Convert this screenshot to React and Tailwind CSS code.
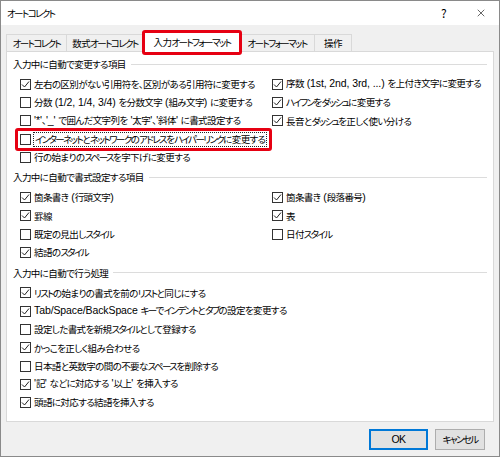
import { X } from 'lucide-react'

const sections = [
    {
        title: '入力中に自動で変更する項目',
        rows: [
            [{ t: '左右の区別がない引用符を、区別がある引用符に変更する', c: true }, { t: '序数 (1st, 2nd, 3rd, ...) を上付き文字に変更する', c: true }],
            [{ t: '分数 (1/2, 1/4, 3/4) を分数文字 (組み文字) に変更する', c: false }, { t: 'ハイフンをダッシュに変更する', c: true }],
            [{ t: "'*'、'_' で囲んだ文字列を '太字'、'斜体' に書式設定する", c: false }, { t: '長音とダッシュを正しく使い分ける', c: true }],
            [{ t: 'インターネットとネットワークのアドレスをハイパーリンクに変更する', c: false, focus: true }],
            [{ t: '行の始まりのスペースを字下げに変更する', c: false }],
        ],
    },
    {
        title: '入力中に自動で書式設定する項目',
        rows: [
            [{ t: '箇条書き (行頭文字)', c: true }, { t: '箇条書き (段落番号)', c: true }],
            [{ t: '罫線', c: true }, { t: '表', c: true }],
            [{ t: '既定の見出しスタイル', c: false }, { t: '日付スタイル', c: false }],
            [{ t: '結語のスタイル', c: true }],
        ],
    },
    {
        title: '入力中に自動で行う処理',
        rows: [
            [{ t: 'リストの始まりの書式を前のリストと同じにする', c: true }],
            [{ t: 'Tab/Space/BackSpace キーでインデントとタブの設定を変更する', c: true }],
            [{ t: '設定した書式を新規スタイルとして登録する', c: false }],
            [{ t: 'かっこを正しく組み合わせる', c: true }],
            [{ t: '日本語と英数字の間の不要なスペースを削除する', c: false }],
            [{ t: "'記' などに対応する '以上' を挿入する", c: true }],
            [{ t: '頭語に対応する結語を挿入する', c: true }],
        ],
    },
]

const tabs = ['オートコレクト', '数式オートコレクト', '入力オートフォーマット', 'オートフォーマット', '操作']
const tabWidths = ['w-[61px]', 'w-[78px]', 'w-[96px]', 'w-[76px]', 'w-[38px]']

// Meiryo UI sets latin wider and katakana narrower than Noto CJK, so runs get their own spacing
function Label({ text }) {
    return text.split(/([\x20-\x7e]+|[\u30a0-\u30ff]+)/).map((part, i) => {
        if (i % 2 === 0) return <span key={i}>{part}</span>
        if (/^[\x20-\x7e]/.test(part)) {
            return <span key={i} className="[font-family:'Liberation_Sans',sans-serif] text-[10.5px] tracking-[-0.1px]">{part}</span>
        }
        return <span key={i} className="tracking-[-1.6px]">{part}</span>
    })
}

function Box({ checked }) {
    return (
        <span className="w-[11px] h-[11px] shrink-0 border border-[#333] bg-white flex items-center justify-center">
            {checked && (
                <svg width="9" height="9" viewBox="0 0 9 9">
                    <path d="M1 4.5 L3.5 7 L8 1.5" fill="none" stroke="#222" strokeWidth="1" />
                </svg>
            )}
        </span>
    )
}

function Item({ item }) {
    return (
        <div className="h-[18.3px] flex items-center">
            <div className="relative flex items-center whitespace-nowrap">
                <Box checked={item.c} />
                {item.focus ? (
                    <span className="ml-[2px] px-[1px] border border-dotted border-[#222] leading-[13px]"><Label text={item.t} /></span>
                ) : (
                    <span className="ml-[3px]"><Label text={item.t} /></span>
                )}
                {item.focus && (
                    <span className="absolute left-[-5px] right-[-5px] top-[-4px] bottom-[-4px] border-[3px] border-[#e60012] rounded-[3px]" />
                )}
            </div>
        </div>
    )
}

export default function App() {
    return (
        <div className="w-[500px] h-[457px] border border-[#8a8a8a] bg-[#f0f0f0] flex flex-col text-[9.5px] tracking-[-0.6px] text-black [font-family:'Noto_Sans_CJK_JP','Noto_Sans',sans-serif] [font-feature-settings:'palt']">
            <div className="h-[24px] bg-white flex items-center pl-[6px] pr-[12px] shrink-0">
                <span className="flex-1"><Label text="オートコレクト" /></span>
                <span className="text-[12px] mr-[29px]">?</span>
                <X size={12} strokeWidth={1.2} />
            </div>

            <div className="px-[5px] pt-[7px] relative">
                <div className="flex items-end h-[19px]">
                    {tabs.map((tab, i) => (
                        <div
                            key={tab}
                            className={
                                i === 2
                                    ? `${tabWidths[i]} h-[20px] -mb-px bg-white border border-b-0 border-[#d9d9d9] flex items-center justify-center whitespace-nowrap z-10 relative`
                                    : `${tabWidths[i]} h-[17px] bg-[#f0f0f0] border border-b-0 border-[#d9d9d9] -ml-px first:ml-0 flex items-center justify-center whitespace-nowrap`
                            }
                        >
                            <span><Label text={tab} /></span>
                            {i === 2 && (
                                <span className="absolute left-[-3px] top-[-3px] w-[100px] h-[25px] border-[3px] border-[#e60012] rounded-[3px]" />
                            )}
                        </div>
                    ))}
                </div>

                <div className="h-[371px] bg-white border border-[#d9d9d9] px-[6px] pt-[3px]">
                    {sections.map((s, si) => (
                        <div key={s.title} className={si > 0 ? 'mt-[2px]' : ''}>
                            <div className="flex items-center h-[18px]">
                                <span>{s.title}</span>
                                <span className="flex-1 h-px bg-[#dcdcdc] ml-[5px]" />
                            </div>
                            <div className="pl-[7px] mt-[2px]">
                                {s.rows.map((r, ri) => (
                                    <div key={ri} className="grid grid-cols-[252px_1fr]">
                                        {r.map((item) => (
                                            <Item key={item.t} item={item} />
                                        ))}
                                    </div>
                                ))}
                            </div>
                        </div>
                    ))}
                </div>

                <div className="flex justify-end gap-[7px] mt-[7px] pr-[9px]">
                    <button className="w-[59px] h-[21px] bg-[#e1e1e1] border border-[#0078d7] shadow-[inset_0_0_0_1px_#0078d7] [font-family:'Liberation_Sans',sans-serif] text-[10.5px]">OK</button>
                    <button className="w-[50px] h-[21px] bg-[#e1e1e1] border border-[#adadad] whitespace-nowrap"><Label text="キャンセル" /></button>
                </div>
            </div>
        </div>
    )
}
